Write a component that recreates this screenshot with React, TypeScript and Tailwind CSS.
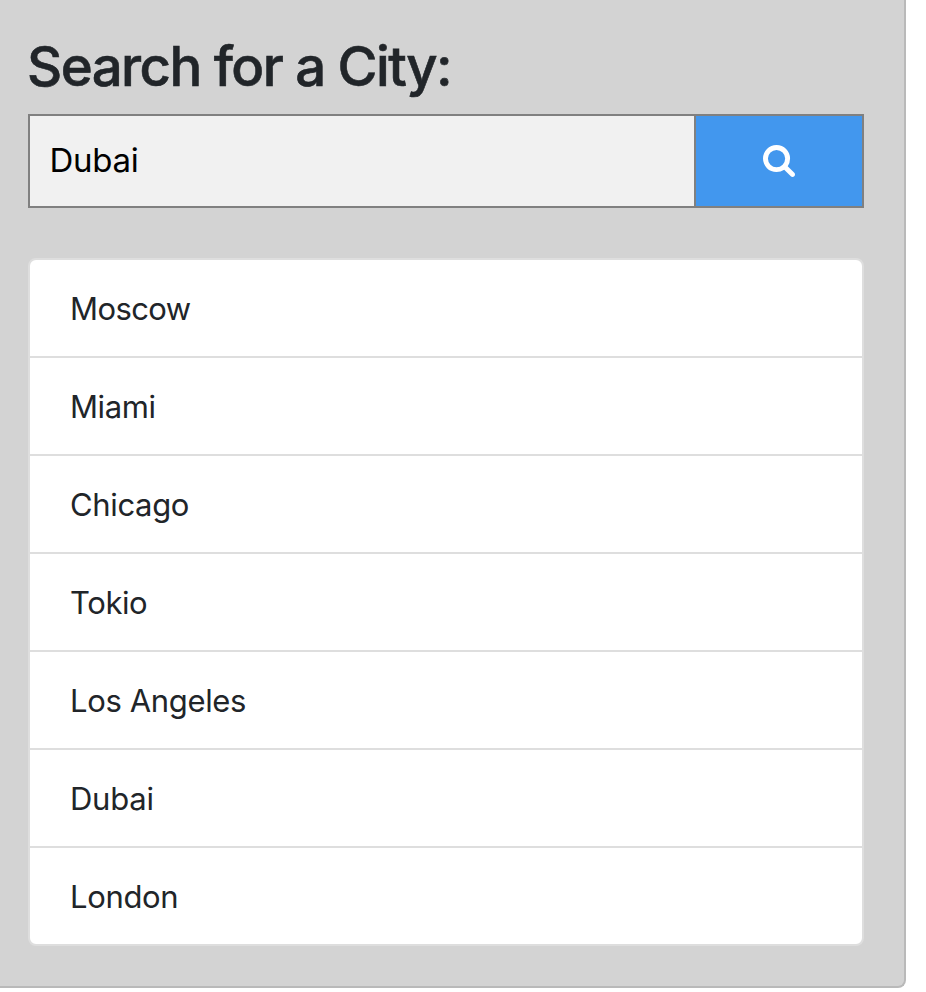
const cities = [
  { name: 'Moscow', tracking: 'tracking-[-0.6px]' },
  { name: 'Miami', tracking: 'tracking-[-0.4px]' },
  { name: 'Chicago', tracking: 'tracking-[-0.35px]' },
  { name: 'Tokio', tracking: 'tracking-[-0.4px]' },
  { name: 'Los Angeles', tracking: 'tracking-[-0.35px]' },
  { name: 'Dubai', tracking: 'tracking-[-0.25px]' },
  { name: 'London', tracking: 'tracking-[-0.35px]' },
];

function SearchIcon() {
  return (
    <svg className="block h-8 w-8" viewBox="0 128 1664 1664" fill="currentColor" aria-hidden="true">
      <path d="M1152 832q0-185-131.5-316.5t-316.5-131.5-316.5 131.5-131.5 316.5 131.5 316.5 316.5 131.5 316.5-131.5 131.5-316.5zm512 832q0 52-38 90t-90 38q-54 0-90-38l-343-342q-179 124-399 124-143 0-273.5-55.5t-225-150-150-225-55.5-273.5 55.5-273.5 150-225 225-150 273.5-55.5 273.5 55.5 225 150 150 225 55.5 273.5q0 220-124 399l343 343q37 37 37 90z" />
    </svg>
  );
}

function SearchBar() {
  return (
    <form className="flex h-[94px] border-2 border-[#808080]" onSubmit={(e) => e.preventDefault()}>
      <input
        type="text"
        defaultValue="Dubai"
        aria-label="City"
        className="min-w-0 flex-1 bg-[#f1f1f1] pl-[19.5px] text-[33px] tracking-[-0.3px] text-black outline-none"
      />
      <button
        type="submit"
        aria-label="Search"
        className="flex w-[168px] items-center justify-center border-l-2 border-[#808080] bg-[#4297ee] text-white"
      >
        <SearchIcon />
      </button>
    </form>
  );
}

export default function App() {
  return (
    <div className="h-[992px] w-full overflow-hidden bg-white font-['Inter',sans-serif]">
      <main className="h-[988px] w-[906px] rounded-br-lg border-r-2 border-b-2 border-[#b9b9b9] bg-[#d3d3d3] pt-[33px] pr-10 pl-7 text-[#212529]">
        <h1 className="-ml-px mb-[14px] text-[54.5px] leading-[67px] font-medium tracking-[-1.55px] whitespace-nowrap [-webkit-text-stroke:0.6px_currentColor]">
          Search for a City:
        </h1>
        <SearchBar />
        <ul className="mt-[50px] overflow-hidden rounded-lg border-2 border-[#dedede] bg-white">
          {cities.map((city) => (
            <li
              key={city.name}
              className={`h-[98px] border-b-2 border-[#dedede] pt-[25px] pl-10 text-[31px] leading-[48px] last:h-24 last:border-b-0 ${city.tracking}`}
            >
              {city.name}
            </li>
          ))}
        </ul>
      </main>
    </div>
  );
}
